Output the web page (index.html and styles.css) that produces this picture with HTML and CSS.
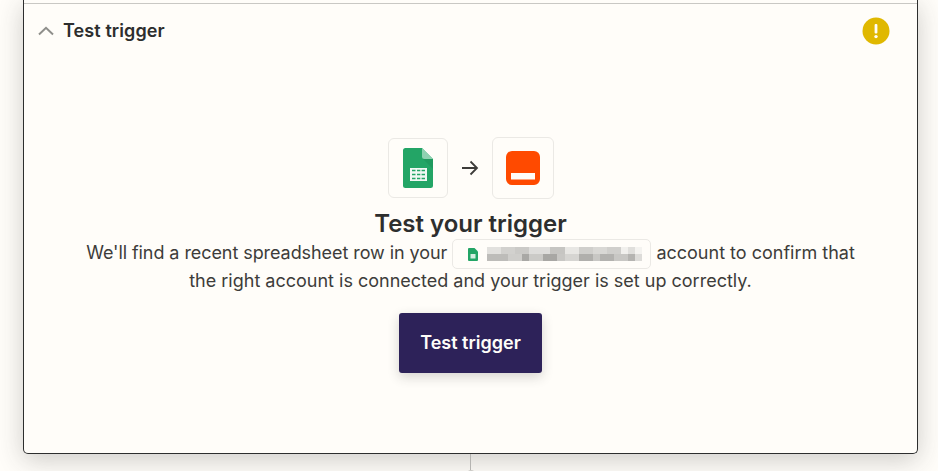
FILE: index.html
```html
<!DOCTYPE html>
<html lang="en">
<head>
    <meta charset="UTF-8">
    <title>Test trigger</title>
    <link rel="stylesheet" href="styles.css">
</head>
<body>
<div class="card">
    <div class="card-head">
        <svg class="chevron" width="16" height="10" viewBox="0 0 16 10"><path d="M1 8.500 8 1.800l7 6.700" fill="none" stroke="#8f8f8b" stroke-width="2"/></svg>
        <span class="card-title">Test trigger</span>
        <span class="warn"><svg width="28" height="28" viewBox="0 0 28 28"><circle cx="14" cy="14" r="13.500" fill="#e0b800"/><rect x="12.600" y="7" width="2.800" height="9.600" rx="1" fill="#fffdf9"/><circle cx="14" cy="19.600" r="1.700" fill="#fffdf9"/></svg></span>
    </div>
    <div class="card-body">
        <div class="apps">
            <div class="app-box">
                <svg width="30" height="40" viewBox="0 0 30 40">
                    <path d="M2.500 0H19l11 11v26.500a2.500 2.500 0 0 1-2.500 2.500h-25A2.500 2.500 0 0 1 0 37.500v-35A2.500 2.500 0 0 1 2.500 0z" fill="#23a566"/>
                    <path d="M20 11l10 10V11z" fill="#1f9a5e"/>
                    <path d="M19 0l11 11H21.500A2.500 2.500 0 0 1 19 8.500z" fill="#8ed1b1"/>
                    <path d="M7 20h17v13H7z" fill="#f1f8f4"/>
                    <path d="M9 22.500h3.500M14 22.500h3.300M18.600 22.500h3.400M9 26.500h3.500M14 26.500h3.300M18.600 26.500h3.400M9 30.500h3.500M14 30.500h3.300M18.600 30.500h3.400" stroke="#23a566" stroke-width="1.600"/>
                </svg>
            </div>
            <svg class="arrow" width="18" height="16" viewBox="0 0 18 16"><path d="M1 8h15M9.500 1.500 16 8l-6.500 6.500" fill="none" stroke="#3d3c3a" stroke-width="1.800"/></svg>
            <div class="app-box app-box-wide">
                <svg width="34" height="34" viewBox="0 0 34 34">
                    <rect width="34" height="34" rx="6" fill="#ff4a00"/>
                    <rect x="5" y="22" width="24" height="6.500" fill="#fffdf9"/>
                </svg>
            </div>
        </div>
        <h2 class="heading">Test your trigger</h2>
        <div class="desc">
            <div class="desc-line"><span class="desc-lead">We'll find a recent spreadsheet row in your</span>
                <span class="pill">
                    <svg width="10" height="13" viewBox="0 0 10 13"><path d="M1 0h5.500L10 3.500V12a1 1 0 0 1-1 1H1a1 1 0 0 1-1-1V1a1 1 0 0 1 1-1z" fill="#23a566"/><path d="M2.500 6h5v4.500h-5z" fill="#d5eee1"/></svg>
                    <svg class="blur" width="155" height="14" viewBox="0 0 22 2" preserveAspectRatio="none" shape-rendering="crispEdges">
                        <rect x="0" y="0" width="22" height="1" fill="#e2e1de"/>
                        <rect x="2" y="0" width="2" height="1" fill="#d2d1ce"/>
                        <rect x="4" y="0" width="2" height="1" fill="#cbcac7"/>
                        <rect x="6" y="0" width="3" height="1" fill="#dedddb"/>
                        <rect x="9" y="0" width="2" height="1" fill="#c6c5c2"/>
                        <rect x="11" y="0" width="2" height="1" fill="#e8e7e4"/>
                        <rect x="13" y="0" width="2" height="1" fill="#d0cfcc"/>
                        <rect x="15" y="0" width="2" height="1" fill="#d9d8d5"/>
                        <rect x="17" y="0" width="2" height="1" fill="#d0cfcc"/>
                        <rect x="19" y="0" width="1" height="1" fill="#f1f0ed"/>
                        <rect x="20" y="0" width="1" height="1" fill="#e0dfdc"/>
                        <rect x="21" y="0" width="1" height="1" fill="#f4f3f0"/>
                        <rect x="0" y="1" width="22" height="1" fill="#bdbcb9"/>
                        <rect x="3" y="1" width="2" height="1" fill="#cfcecb"/>
                        <rect x="5" y="1" width="1" height="1" fill="#a9a8a5"/>
                        <rect x="6" y="1" width="2" height="1" fill="#cbcac7"/>
                        <rect x="8" y="1" width="2" height="1" fill="#a8a7a4"/>
                        <rect x="10" y="1" width="1" height="1" fill="#c8c7c4"/>
                        <rect x="11" y="1" width="2" height="1" fill="#d6d5d2"/>
                        <rect x="13" y="1" width="2" height="1" fill="#b0afac"/>
                        <rect x="15" y="1" width="1" height="1" fill="#c8c7c4"/>
                        <rect x="16" y="1" width="2" height="1" fill="#b3b2af"/>
                        <rect x="18" y="1" width="2" height="1" fill="#c8c7c4"/>
                        <rect x="20" y="1" width="1" height="1" fill="#b5b4b1"/>
                        <rect x="21" y="1" width="1" height="1" fill="#dddcd9"/>
                    </svg>
                </span>
                account to confirm that</div>
            <div class="desc-line">the right account is connected and your trigger is set up correctly.</div>
        </div>
        <button class="test-btn">Test trigger</button>
    </div>
</div>
<div class="connector"></div>
<div class="connector-dot"></div>
</body>
</html>
```

FILE: styles.css
```css
html, body {
    margin: 0;
    height: 471px;
    overflow: hidden;
}

body {
    background: #fffdf9;
    font-family: Inter, "Liberation Sans", sans-serif;
    color: #2d2e2e;
}

.card {
    box-sizing: border-box;
    width: 895px;
    height: 454px;
    margin-left: 23px;
    padding-top: 3px;
    background: #fffdf9;
    border: 1px solid #2d2e2e;
    border-top: 0;
    border-radius: 0 0 5px 5px;
    box-shadow: 0 6px 26px rgba(45, 46, 46, 0.24);
    display: flex;
    flex-direction: column;
}

.card-head {
    border-top: 1px solid #c9c8c4;
    height: 54px;
    display: flex;
    align-items: center;
    padding: 0 27px 0 14px;
    box-sizing: border-box;
}

.chevron {
    margin-right: 9px;
}

.card-title {
    font-size: 18px;
    font-weight: 600;
    letter-spacing: 0.1px;
}

.warn {
    margin-left: auto;
    display: flex;
}

.card-body {
    display: flex;
    flex-direction: column;
    align-items: center;
    padding-top: 80px;
}

.apps {
    display: flex;
    align-items: center;
}

.app-box {
    box-sizing: border-box;
    width: 60px;
    height: 60px;
    border: 1px solid #ebe9e5;
    border-radius: 6px;
    display: flex;
    align-items: center;
    justify-content: center;
}

.app-box-wide {
    width: 62px;
    height: 62px;
}

.arrow {
    margin: 0 13px;
}

.heading {
    margin: 10px 0 0;
    font-size: 24px;
    line-height: 30px;
    font-weight: 600;
}

.desc {
    font-size: 18px;
    line-height: 28px;
    text-align: center;
    color: #3d3c3a;
}

.desc-line {
    height: 28px;
    white-space: nowrap;
}

.desc-lead {
    letter-spacing: -0.07px;
}

.pill {
    display: inline-flex;
    align-items: center;
    box-sizing: border-box;
    width: 199px;
    height: 30px;
    padding-left: 15px;
    vertical-align: middle;
    border: 1px solid #ebe9e5;
    border-radius: 5px;
    gap: 9px;
}

.test-btn {
    margin-top: 18px;
    width: 143px;
    height: 60px;
    padding: 0 6px 2px;
    border: 0;
    border-radius: 3px;
    background: #2d2259;
    color: #fffdf9;
    font-family: inherit;
    font-size: 18px;
    font-weight: 600;
    box-shadow: 0 4px 12px rgba(45, 46, 46, 0.2);
}

.connector {
    width: 1px;
    height: 16px;
    margin-left: 470px;
    background: #b5b4b1;
}

.connector-dot {
    width: 10px;
    height: 10px;
    margin-left: 466px;
    border-radius: 50%;
    background: #c9c8c4;
}
```
